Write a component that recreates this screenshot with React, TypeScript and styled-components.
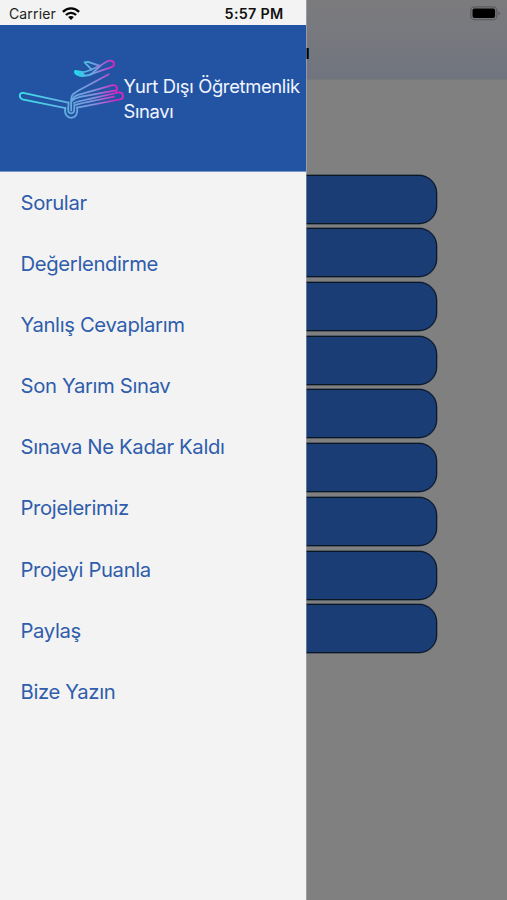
import React from "react";
import styled, { createGlobalStyle } from "styled-components";

const GlobalStyle = createGlobalStyle`
  * { box-sizing: border-box; }
  body { margin: 0; font-family: Inter, "Liberation Sans", sans-serif; }
`;

const Screen = styled.div`
  position: relative;
  width: 507px;
  height: 900px;
  overflow: hidden;
  background: #808080;
`;

const PageHeader = styled.header`
  display: flex;
  flex-direction: column;
  height: 80px;
  background: linear-gradient(#7b7b7d, #78797e 45%, #70747f);
  border-bottom: 1px solid #77797d;
`;

const PageStatus = styled.div`
  display: flex;
  justify-content: flex-end;
  height: 27px;
  padding: 6px 5px 0 0;
`;

const PageTitle = styled.h1`
  margin: 0;
  padding-right: 197px;
  text-align: right;
  font-size: 20px;
  line-height: 54px;
  font-weight: 700;
  color: #000;
`;

const QuizList = styled.div`
  display: flex;
  flex-direction: column;
  gap: 4.7px;
  padding: 94.7px 70px 0 69.5px;
`;

const QuizButton = styled.div`
  height: 49px;
  border: 1px solid #0b1623;
  border-radius: 18px;
  background: #1b3d75;
  box-shadow: 0 0 0 0.4px #26364b;
`;

const Drawer = styled.aside`
  position: absolute;
  top: 0;
  left: 0;
  width: 306px;
  height: 900px;
  background: #f3f3f3;
  box-shadow: 1px 0 0 rgba(185, 195, 210, 0.45);
`;

const StatusBar = styled.div`
  display: grid;
  grid-template-columns: 52.5px 20px 1fr;
  align-items: center;
  height: 25px;
  padding: 2px 22.5px 0 9px;
  font-size: 14px;
  line-height: 22px;
  color: #222;
`;

const Carrier = styled.span`
  letter-spacing: 0.14px;
`;

const Clock = styled.span`
  justify-self: end;
  font-weight: 600;
  font-size: 14.3px;
  letter-spacing: 0.3px;
  color: #111;
`;

const Banner = styled.div`
  display: flex;
  height: 147px;
  padding: 25px 0 0 10px;
  background: #2354a3;
  border-bottom: 1px solid #7897c8;
`;

const BannerTitle = styled.div`
  width: 185px;
  margin: 24px -12px 0 -6.5px;
  font-size: 18.4px;
  line-height: 24.5px;
  letter-spacing: -0.34px;
  color: #f1f5ff;
`;

const Menu = styled.nav`
  display: flex;
  flex-direction: column;
`;

const MenuItem = styled.a`
  height: 61.1px;
  padding-left: 20.5px;
  font-size: 20.3px;
  line-height: 61.1px;
  letter-spacing: -0.36px;
  white-space: nowrap;
  color: #2f5dab;
`;

const items = [
  "Sorular",
  "Değerlendirme",
  "Yanlış Cevaplarım",
  "Son Yarım Sınav",
  "Sınava Ne Kadar Kaldı",
  "Projelerimiz",
  "Projeyi Puanla",
  "Paylaş",
  "Bize Yazın",
];

const Wifi = () => (
  <svg width="18" height="13" viewBox="0 0 18 13" fill="none" stroke="#050505" strokeWidth="2.3">
    <path d="M.9 4.9C5.5.2 12.5.2 17.1 4.9" />
    <path d="M3.9 8C6.8 5.1 11.2 5.1 14.1 8" />
    <path d="M6.1 10.1C7.8 8.5 10.2 8.5 11.9 10.1L9 13Z" fill="#050505" stroke="none" />
  </svg>
);

const Battery = () => (
  <svg width="33" height="15" viewBox="0 0 33 15">
    <rect x="1.8" y=".9" width="26" height="12.8" rx="3.8" fill="none" stroke="#5c5c60" strokeWidth="1.3" />
    <rect x="3.5" y="2.6" width="22.6" height="9.4" rx="2" fill="#000" />
    <path d="M29.3 5.2C31.7 6 31.7 8.6 29.3 9.4Z" fill="#5c5c60" />
  </svg>
);

const Logo = () => (
  <svg width="120" height="75" viewBox="0 -.4 120 75" fill="none" strokeLinecap="round" strokeLinejoin="round">
    <defs>
      <linearGradient id="plane" gradientUnits="userSpaceOnUse" x1="65" y1="0" x2="105" y2="0">
        <stop stopColor="#20dced" />
        <stop offset=".5" stopColor="#769edf" />
        <stop offset="1" stopColor="#e817c8" />
      </linearGradient>
      <linearGradient id="book" gradientUnits="userSpaceOnUse" x1="10" y1="0" x2="113" y2="0">
        <stop stopColor="#3ce1ea" />
        <stop offset=".52" stopColor="#68a8df" />
        <stop offset=".72" stopColor="#8592dc" />
        <stop offset=".94" stopColor="#df1fc5" />
        <stop offset="1" stopColor="#d92bc4" />
      </linearGradient>
    </defs>
    <g stroke="url(#plane)" strokeWidth="1.8">
      <path d="M65.2 20.5C63.4 23.2 68.8 25.8 73 25.6C77 25.6 80.5 24.4 83.8 22.7L101.5 16.7C105.8 14.8 104.4 9.8 99.4 10.2C96 10.6 93.8 13.4 90 15.4L82 18.9C77.6 20.5 75 22.3 71.5 21.6L65.2 20.5Z" />
      <path d="M81.5 19L74.5 12L78 11.4L90 15.4" />
      <path d="M80.5 24.2L90.4 15.6" />
      <path d="M67 22.6L73.5 24" strokeWidth="2.4" />
    </g>
    <g stroke="url(#book)" strokeWidth="1.75">
      <path d="M58.2 52.2L13.2 42.5C8.8 42 8.8 47.6 12.4 48.9L55.6 57.8" />
      <path d="M58.6 52L58.2 59.2C58.2 64.2 64.2 64.2 64.2 59.2L64.5 54" />
      <path d="M55.2 57.5C54.2 64.2 57.2 67.4 61.2 67.4C65.8 67.4 68.1 63.2 67.1 57" />
      <path d="M61.2 53V60" />
      <path d="M61.2 53V49C61.2 43.2 65 42.7 69 39.8L98.8 23.8" />
      <path d="M62.3 48.8C64.4 44.5 69 44.1 73.4 43L101.8 35C106.5 34 108.4 37.4 106 41.2" />
      <path d="M61.8 50.6C66.3 46.3 72 46.3 77 45.3L105.8 40" />
      <path d="M64 52.6C69.5 50.2 76 49.4 82 48L108.4 42.1C113.9 41.1 114.6 48.3 109.6 49.1L67.2 57.3" />
      <path d="M66 54.5C73 52 79 51.2 85 50.1L104 46.3" />
    </g>
  </svg>
);

export default function App() {
  return (
    <Screen>
      <GlobalStyle />
      <PageHeader>
        <PageStatus><Battery /></PageStatus>
        <PageTitle>Yurt Dışı Sınavı</PageTitle>
      </PageHeader>
      <QuizList>
        {items.map((label) => <QuizButton key={label} />)}
      </QuizList>
      <Drawer>
        <StatusBar>
          <Carrier>Carrier</Carrier>
          <Wifi />
          <Clock>5:57 PM</Clock>
        </StatusBar>
        <Banner>
          <Logo />
          <BannerTitle>Yurt Dışı Öğretmenlik Sınavı</BannerTitle>
        </Banner>
        <Menu>
          {items.map((label) => <MenuItem key={label}>{label}</MenuItem>)}
        </Menu>
      </Drawer>
    </Screen>
  );
}
